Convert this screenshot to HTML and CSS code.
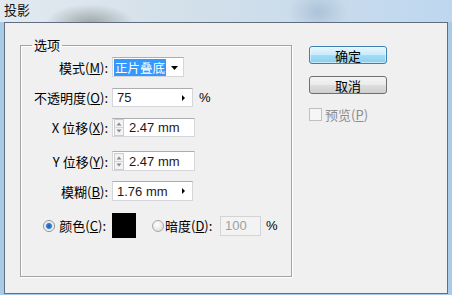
FILE: index.html
```html
<!DOCTYPE html>
<html>
<head>
    <meta charset="utf-8">
    <title>投影</title>
    <link rel="stylesheet" href="styles.css">
</head>
<body>
    <div class="window">
        <div class="titlebar"><span class="title">投影</span></div>
        <div class="client">
            <fieldset class="group">
                <legend>选项</legend>

                <div class="row row-mode">
                    <span class="lbl">模式(<u>M</u>):</span>
                    <div class="field select">
                        <span class="sel-text">正片叠底</span>
                        <svg class="drop" width="7" height="4" viewBox="0 0 7 4"><path d="M0 0h7L3.5 4z" fill="#000"/></svg>
                    </div>
                </div>

                <div class="row row-opacity">
                    <span class="lbl">不透明度(<u>O</u>):</span>
                    <div class="field num">
                        <span class="val">75</span>
                        <svg class="more" width="3" height="6" viewBox="0 0 3 6"><path d="M0 0L3 3L0 6z" fill="#000"/></svg>
                    </div>
                    <span class="pct">%</span>
                </div>

                <div class="row row-x">
                    <span class="lbl">X 位移(<u>X</u>):</span>
                    <div class="field spin">
                        <svg class="spinner" width="10" height="17" viewBox="0 0 10 17">
                            <rect x="0.5" y="0.5" width="9" height="16" fill="#f3f3f3" stroke="#cdcdcd"/>
                            <line x1="1" y1="8.5" x2="9" y2="8.5" stroke="#d6d6d6"/>
                            <path d="M2.5 6.5h5L5 3.5z" fill="#8a8a8a"/>
                            <path d="M2.5 10.5h5L5 13.5z" fill="#8a8a8a"/>
                        </svg>
                        <span class="val">2.47 mm</span>
                    </div>
                </div>

                <div class="row row-y">
                    <span class="lbl">Y 位移(<u>Y</u>):</span>
                    <div class="field spin">
                        <svg class="spinner" width="10" height="17" viewBox="0 0 10 17">
                            <rect x="0.5" y="0.5" width="9" height="16" fill="#f3f3f3" stroke="#cdcdcd"/>
                            <line x1="1" y1="8.5" x2="9" y2="8.5" stroke="#d6d6d6"/>
                            <path d="M2.5 6.5h5L5 3.5z" fill="#8a8a8a"/>
                            <path d="M2.5 10.5h5L5 13.5z" fill="#8a8a8a"/>
                        </svg>
                        <span class="val">2.47 mm</span>
                    </div>
                </div>

                <div class="row row-blur">
                    <span class="lbl">模糊(<u>B</u>):</span>
                    <div class="field num">
                        <span class="val">1.76 mm</span>
                        <svg class="more" width="3" height="6" viewBox="0 0 3 6"><path d="M0 0L3 3L0 6z" fill="#000"/></svg>
                    </div>
                </div>

                <div class="row row-color">
                    <span class="lbl lbl-radio"><span class="radio checked"></span>颜色(<u>C</u>):</span>
                    <span class="swatch"></span>
                    <span class="radio radio-shade"></span>
                    <span class="shade-lbl">暗度(<u>D</u>):</span>
                    <div class="field disabled"><span class="val">100</span></div>
                    <span class="pct pct-shade">%</span>
                </div>
            </fieldset>

            <div class="buttons">
                <button class="btn btn-default">确定</button>
                <button class="btn">取消</button>
                <label class="check"><span class="box"></span>预览(<u>P</u>)</label>
            </div>
        </div>
    </div>
</body>
</html>
```

FILE: styles.css
```css
body {
    margin: 0;
    width: 452px;
    height: 295px;
    overflow: hidden;
    background-color: #a9cbe8;
    font-family: "Noto Sans CJK SC", sans-serif;
    font-size: 13px;
    color: #000;
}
.window {
    height: 295px;
    display: flex;
    flex-direction: column;
}
.titlebar {
    height: 22px;
    flex: none;
    background:
        radial-gradient(45px 20px at 90px 24px, rgba(120, 130, 126, 0.65), rgba(120, 130, 126, 0)),
        radial-gradient(30px 22px at 318px 12px, rgba(120, 150, 180, 0.35), rgba(120, 150, 180, 0)),
        linear-gradient(90deg, #e2eaf1 0, #d5e1ea 35%, #cbdceb 65%, #bed7ef 100%);
}
.title {
    display: block;
    padding-left: 4px;
    font-size: 13px;
    line-height: 19px;
    color: #111;
}
.client {
    flex: none;
    height: 272px;
    margin: 0 4px;
    box-sizing: border-box;
    border: 1px solid #5f6d7c;
    background-color: #f0f0f0;
    display: flex;
    align-items: flex-start;
}

/* group box */
.group {
    margin: 15px 0 0 15px;
    width: 272px;
    height: 239px;
    box-sizing: border-box;
    padding: 0;
    border: 1px solid #a3a3a3;
    box-shadow: inset 1px 1px 0 #fff, 1px 1px 0 #fff;
}
.group legend {
    margin-left: 11px;
    padding: 0 2px;
    line-height: 14px;
}
.row {
    display: flex;
    align-items: center;
    height: 20px;
    margin-top: 11px;
}
.row-mode { margin-top: 5px; }
.row-opacity { height: 19px; }
.row-x { height: 19px; margin-top: 11px; }
.row-y { margin-top: 14px; }
.row-blur { margin-top: 10px; }
.row-color { height: 25px; margin-top: 12px; }
.lbl {
    flex: none;
    width: 87px;
    margin-right: 4px;
    text-align: right;
    white-space: nowrap;
}
u {
    text-decoration: underline;
    text-underline-offset: 1px;
}

/* edit fields */
.field {
    flex: none;
    box-sizing: border-box;
    height: 100%;
    background-color: #fff;
    border: 1px solid #d3d7dc;
    border-top-color: #abadb3;
    display: flex;
    align-items: center;
    font-family: "Liberation Sans", sans-serif;
    font-size: 13px;
    color: #1a1a1a;
}
.select {
    width: 72px;
    padding-left: 1px;
}
.sel-text {
    height: 17px;
    line-height: 17px;
    padding: 0 1px;
    background-color: #3399ff;
    color: #fff;
    font-family: "Noto Sans CJK SC", sans-serif;
    font-size: 12.5px;
}
.drop {
    margin-left: auto;
    margin-right: 5px;
    margin-top: 2px;
}
.num {
    width: 81px;
    padding-left: 4px;
}
.more {
    margin-left: auto;
    margin-right: 7px;
}
.spin {
    width: 83px;
    padding-left: 1px;
}
.spin .val {
    margin-left: 5px;
}
.pct {
    margin-left: 6px;
    font-family: "Liberation Sans", sans-serif;
    font-size: 13px;
}

/* colour row */
.lbl-radio {
    display: flex;
    align-items: center;
    justify-content: flex-end;
    padding-right: 2px;
    box-sizing: border-box;
}
.radio {
    flex: none;
    width: 12px;
    height: 12px;
    box-sizing: border-box;
    border-radius: 50%;
    border: 1px solid #8f8f8f;
    background: radial-gradient(circle at 40% 35%, #fff, #d6d6d6);
    margin-right: 4px;
}
.radio.checked {
    background:
        radial-gradient(circle, #1d5ab0 0, #3b7fd0 2.5px, #d9e6f3 3.5px, #fff 5px);
}
.swatch {
    flex: none;
    width: 24px;
    height: 25px;
    background-color: #000;
}
.radio-shade {
    margin-left: 16px;
    margin-right: 1px;
    border-color: #a8a8a8;
}
.shade-lbl {
    flex: none;
    width: 54px;
    white-space: nowrap;
}
.disabled {
    width: 41px;
    height: 20px;
    margin-left: 1px;
    padding-left: 4px;
    background-color: #f3f3f3;
    border-color: #d4d4d4;
    color: #a0a0a0;
}
.pct-shade {
    margin-left: 5px;
}

/* buttons column */
.buttons {
    margin: 23px 0 0 17px;
    width: 78px;
    display: flex;
    flex-direction: column;
}
.btn {
    height: 18px;
    box-sizing: border-box;
    padding: 0;
    border: 1px solid #707070;
    border-radius: 3px;
    background: linear-gradient(#f4f4f4 0, #ebebeb 48%, #dddddd 52%, #cfcfcf 100%);
    font-family: "Noto Sans CJK SC", sans-serif;
    font-size: 13px;
    line-height: 15px;
    color: #000;
    margin-bottom: 12px;
}
.btn-default {
    border-color: #3c7fb1;
    background: linear-gradient(#e6f6fd 0, #c9ebfa 48%, #a3dcf5 52%, #8ccfee 100%);
    box-shadow: inset 0 0 0 1px rgba(255, 255, 255, 0.5);
}
.check {
    margin-top: -1px;
    display: flex;
    align-items: center;
    color: #8d8d8d;
}
.check .box {
    width: 13px;
    height: 13px;
    box-sizing: border-box;
    border: 1px solid #c0c0c0;
    background-color: #f6f6f6;
    margin-right: 3px;
}
```
